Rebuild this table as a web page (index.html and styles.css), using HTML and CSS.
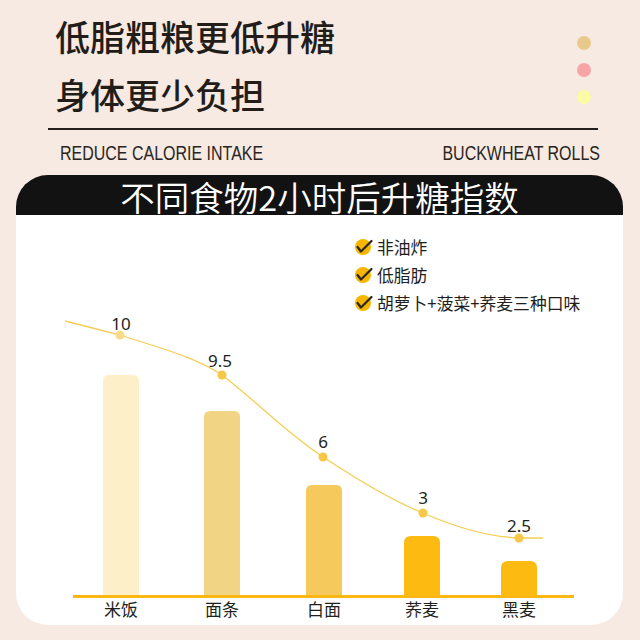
FILE: index.html
```html
<!DOCTYPE html>
<html lang="zh">
<head>
<meta charset="utf-8">
<title>低脂粗粮更低升糖</title>
<link rel="stylesheet" href="styles.css">
</head>
<body>
<div class="page">
  <header class="top">
    <h1 class="title">低脂粗粮更低升糖<br>身体更少负担</h1>
    <div class="dots">
      <span class="dot dot-tan"></span>
      <span class="dot dot-pink"></span>
      <span class="dot dot-yellow"></span>
    </div>
  </header>
  <div class="rule"></div>
  <div class="sub">
    <span class="en en-left">REDUCE CALORIE INTAKE</span>
    <span class="en en-right">BUCKWHEAT ROLLS</span>
  </div>
  <section class="card">
    <div class="card-head">不同食物2小时后升糖指数</div>
    <div class="card-body">
      <ul class="legend">
        <li class="legend-item">
          <svg class="check" viewBox="0 0 16 16" width="16" height="16"><circle cx="8" cy="8" r="8" fill="#f6b600"/><polyline points="2.5,8 6,12.5 16.5,2" fill="none" stroke="#2a2622" stroke-width="2.2" stroke-linecap="round" stroke-linejoin="round"/></svg>
          <span>非油炸</span>
        </li>
        <li class="legend-item">
          <svg class="check" viewBox="0 0 16 16" width="16" height="16"><circle cx="8" cy="8" r="8" fill="#f6b600"/><polyline points="2.5,8 6,12.5 16.5,2" fill="none" stroke="#2a2622" stroke-width="2.2" stroke-linecap="round" stroke-linejoin="round"/></svg>
          <span>低脂肪</span>
        </li>
        <li class="legend-item">
          <svg class="check" viewBox="0 0 16 16" width="16" height="16"><circle cx="8" cy="8" r="8" fill="#f6b600"/><polyline points="2.5,8 6,12.5 16.5,2" fill="none" stroke="#2a2622" stroke-width="2.2" stroke-linecap="round" stroke-linejoin="round"/></svg>
          <span>胡萝卜+菠菜+荞麦三种口味</span>
        </li>
      </ul>
      <svg class="chart" viewBox="16 309 608 316" width="608" height="316">
        <path d="M103,596 V381 Q103,375 109,375 H133 Q139,375 139,381 V596 Z" fill="#fdf0c9"/>
        <path d="M204,596 V417 Q204,411 210,411 H234 Q240,411 240,417 V596 Z" fill="#f1d584"/>
        <path d="M306,596 V491 Q306,485 312,485 H336 Q342,485 342,491 V596 Z" fill="#f5c95c"/>
        <path d="M404,596 V543 Q404,536 411,536 H433 Q440,536 440,543 V596 Z" fill="#fdbb12"/>
        <path d="M501,596 V568 Q501,561 508,561 H530 Q537,561 537,568 V596 Z" fill="#fdbb12"/>
        <line x1="73" y1="596.5" x2="574" y2="596.5" stroke="#fbb713" stroke-width="3"/>
        <path d="M65,321 C85,326 100,330 120,335 C160,348 195,357 222,375 C255,400 285,432 323,457 C355,478 390,500 423,513 C455,527 490,537 519,538 L543,538" fill="none" stroke="#f5cd55" stroke-width="1.3"/>
        <circle cx="120" cy="335" r="4.5" fill="#f8da88"/>
        <circle cx="222" cy="375" r="4.5" fill="#f7c748"/>
        <circle cx="323" cy="457" r="4.5" fill="#f7c748"/>
        <circle cx="423" cy="513" r="4.5" fill="#f7c748"/>
        <circle cx="519" cy="538" r="4.5" fill="#f7c748"/>
        <g class="val">
          <text x="121" y="330">10</text>
          <text x="220" y="367">9.5</text>
          <text x="323" y="448">6</text>
          <text x="423" y="504">3</text>
          <text x="519" y="532">2.5</text>
        </g>
        <g class="cat">
          <text x="121" y="616">米饭</text>
          <text x="222" y="616">面条</text>
          <text x="324" y="616">白面</text>
          <text x="422" y="616">荞麦</text>
          <text x="519" y="616">黑麦</text>
        </g>
      </svg>
    </div>
  </section>
</div>
</body>
</html>
```

FILE: styles.css
```css
html, body {
  margin: 0;
  padding: 0;
  background: #f6eae2;
}
.page {
  width: 640px;
  height: 640px;
  overflow: hidden;
  font-family: "Noto Sans CJK SC", "Noto Sans", sans-serif;
  color: #221c19;
}
.top {
  height: 128px;
  display: flex;
  justify-content: space-between;
  padding: 0 49px 0 55px;
}
.title {
  margin: 0;
  padding-top: 7px;
  font-size: 35px;
  line-height: 58px;
  font-weight: 500;
  color: #231d1a;
}
.dots {
  display: flex;
  flex-direction: column;
  gap: 13px;
  padding-top: 36px;
}
.dot {
  display: block;
  width: 14px;
  height: 14px;
  border-radius: 50%;
}
.dot-tan { background: #e8c98b; }
.dot-pink { background: #f7a4a7; }
.dot-yellow { background: #fbfba6; }
.rule {
  height: 2px;
  background: #231f1c;
  margin: 0 42px 0 48px;
}
.sub {
  height: 45px;
  display: flex;
  align-items: center;
  justify-content: space-between;
  padding: 0 40px 0 60px;
}
.en {
  display: inline-block;
  font-family: "Liberation Sans", Arial, sans-serif;
  font-size: 20.5px;
  color: #2a2522;
  transform: scaleX(0.78);
  white-space: nowrap;
}
.en-left { transform-origin: left center; }
.en-right { transform-origin: right center; }
.card {
  margin: 0 17px 0 16px;
}
.card-head {
  height: 40px;
  box-sizing: border-box;
  padding-top: 2px;
  background: #121212;
  border-radius: 32px 32px 0 0;
  color: #ffffff;
  font-size: 34.5px;
  line-height: 38px;
  text-align: center;
  font-weight: 350;
}
.card-body {
  height: 410px;
  box-sizing: border-box;
  padding-top: 18px;
  background: #ffffff;
  border-radius: 0 0 32px 32px;
  overflow: hidden;
}
.legend {
  list-style: none;
  margin: 0 0 -8px 0;
  padding: 0 0 0 339px;
}
.legend-item {
  height: 28px;
  display: flex;
  align-items: center;
  gap: 6px;
  font-size: 16.8px;
  color: #221e1b;
}
.check {
  display: block;
  overflow: visible;
  flex: none;
}
.chart {
  display: block;
}
.val text {
  font-family: "Noto Sans", sans-serif;
  font-size: 17px;
  fill: #231f1c;
  text-anchor: middle;
}
.cat text {
  font-family: "Noto Sans CJK SC", sans-serif;
  font-size: 17px;
  fill: #231f1c;
  text-anchor: middle;
}
```
